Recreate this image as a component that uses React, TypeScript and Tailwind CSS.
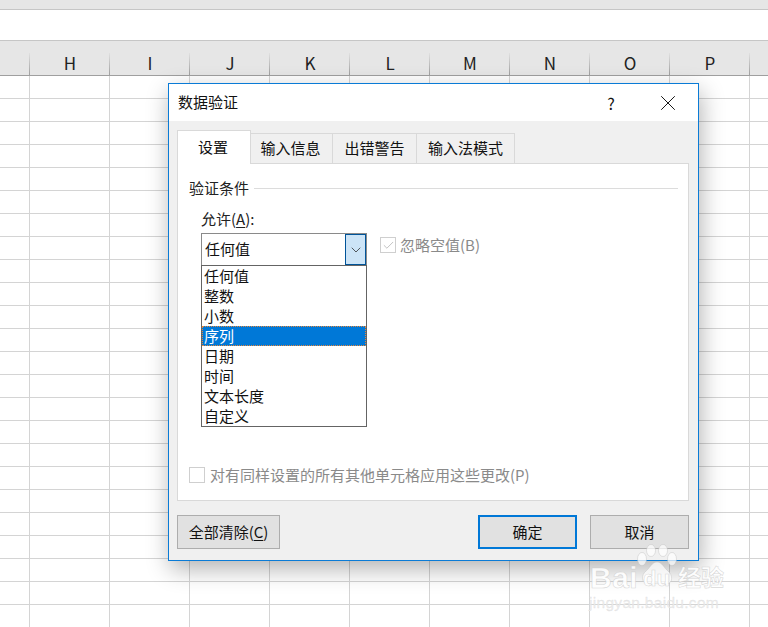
import { ChevronDown, Check, X } from "lucide-react";

const columns = ["H", "I", "J", "K", "L", "M", "N", "O", "P"];
const options = ["任何值", "整数", "小数", "序列", "日期", "时间", "文本长度", "自定义"];
const tabs = [
  { label: "输入信息", width: "w-[83px] pr-[2px]" },
  { label: "出错警告", width: "w-[85px]" },
  { label: "输入法模式", width: "w-[99px]" },
];
const rows = Array.from({ length: 24 }, (_, i) => i);
const cells = Array.from({ length: 10 }, (_, i) => i);

function Sheet() {
  return (
    <div className="flex flex-col">
      <div className="h-[10px] bg-[#e6e6e6] border-b border-[#c6c6c6]" />
      <div className="h-[31px] bg-white border-b border-[#c6c6c6]" />
      <div className="flex h-[35px] bg-[#e6e6e6] border-b border-[#9f9f9f]">
        <HeaderCell className="w-[30px]" />
        {columns.map((c) => (
          <HeaderCell key={c} label={c} className="w-[80px]" />
        ))}
      </div>
      {rows.map((r) => (
        <div key={r} className="flex h-[23px] shrink-0">
          <div className="w-[30px] shrink-0 border-r border-b border-[#d4d4d4]" />
          {cells.map((c) => (
            <div key={c} className="w-[80px] shrink-0 border-r border-b border-[#d4d4d4]" />
          ))}
        </div>
      ))}
    </div>
  );
}

function HeaderCell({ label, className }: { label?: string; className: string }) {
  return (
    <div className={`relative shrink-0 flex items-center justify-center text-[17px] leading-none text-[#222] pt-[15px] pb-[7px] ${className}`}>
      {label}
      <div className="absolute right-0 bottom-0 w-px h-[22px] bg-gradient-to-b from-[#e0e0e0] to-[#9f9f9f]" />
    </div>
  );
}

function Dialog() {
  return (
    <div className="absolute left-[168px] top-[83px] w-[531px] h-[478px] flex flex-col bg-[#f0f0f0] border-[1.5px] border-[#0a7bd6] shadow-[2px_8px_22px_rgba(0,0,0,0.3)]">
      <div className="h-[37px] shrink-0 bg-white flex items-center pl-[9px] text-[15px] text-[#111]">
        <span className="flex-1">数据验证</span>
        <span className="w-[14px] text-center text-[16px] mr-[37px]">?</span>
        <X size={26} strokeWidth={0.9} className="mr-[17px] text-[#111]" />
      </div>
      <div className="flex-1 flex flex-col px-[8px]">
        <div className="flex h-[42px] items-end shrink-0">
          <div className="w-[74px] h-[34px] bg-white border border-b-0 border-[#d9d9d9] flex items-center justify-center text-[15px] text-[#111] relative z-10 -mb-px pb-[1px] pr-[2px]">
            设置
          </div>
          {tabs.map((t) => (
            <div key={t.label} className={`${t.width} h-[30px] -ml-px bg-[#f0f0f0] border border-b-0 border-[#d9d9d9] flex items-center justify-center text-[15px] text-[#111]`}>
              {t.label}
            </div>
          ))}
        </div>
        <div className="h-[338px] w-[512px] shrink-0 bg-white border border-[#d9d9d9] flex flex-col pl-[11px] pr-[10px]">
          <div className="flex items-center h-[22px] mt-[13px] text-[15px] text-[#222]">
            <span>验证条件</span>
            <div className="flex-1 h-px bg-[#dcdcdc] ml-[5px]" />
          </div>
          <div className="ml-[12px] mt-[9px] h-[22px] flex items-center text-[15px] text-[#222]">
            <span>允许(<span className="underline underline-offset-2">A</span>):</span>
          </div>
          <div className="ml-[12px] mt-[3px] flex items-start relative">
            <div className="w-[166px] h-[33px] border border-[#8a8a8a] flex items-center bg-white">
              <span className="flex-1 pl-[3px] text-[15px] text-[#111]">任何值</span>
              <div className="w-[21px] h-[31px] bg-[#cce4f7] border border-[#005499] flex items-center justify-center">
                <ChevronDown size={16} strokeWidth={1.1} className="text-[#222]" />
              </div>
            </div>
            <div className="ml-[13px] mt-[4px] flex items-center">
              <div className="w-[16px] h-[16px] border border-[#cfcfcf] flex items-center justify-center">
                <Check size={13} strokeWidth={1.5} className="text-[#b5b5b5]" />
              </div>
              <span className="ml-[4px] text-[15px] leading-[16px] text-[#8a8a8a]">忽略空值(B)</span>
            </div>
            <div className="absolute left-0 top-[32px] w-[166px] h-[162px] bg-white border border-[#646464] flex flex-col z-20">
              {options.map((o) => (
                <div
                  key={o}
                  className={o === "序列"
                    ? "h-[20px] shrink-0 pl-[2px] flex items-center text-[15px] bg-[#0078d7] text-white outline-1 -outline-offset-1 outline-dotted outline-[#e8873a]"
                    : "h-[20px] shrink-0 pl-[2px] flex items-center text-[15px] text-[#111]"}
                >
                  {o}
                </div>
              ))}
            </div>
          </div>
          <div className="mt-auto mb-[17px] flex items-center">
            <div className="w-[16px] h-[16px] border border-[#cfcfcf]" />
            <span className="ml-[5px] text-[15px] leading-[16px] text-[#8a8a8a]">对有同样设置的所有其他单元格应用这些更改(P)</span>
          </div>
        </div>
        <div className="flex mt-[14px]">
          <button className="w-[103px] h-[34px] bg-[#e1e1e1] border border-[#adadad] text-[15px] text-[#111]">
            全部清除(<span className="underline underline-offset-2">C</span>)
          </button>
          <button className="ml-[198px] w-[99px] h-[34px] bg-[#e1e1e1] border-2 border-[#0078d7] text-[15px] text-[#111]">确定</button>
          <button className="ml-[13px] w-[99px] h-[34px] bg-[#e1e1e1] border border-[#adadad] text-[15px] text-[#111]">取消</button>
        </div>
      </div>
    </div>
  );
}

function Watermark() {
  return (
    <div className="absolute left-[588px] top-[544px] w-[140px] h-[66px] text-[rgba(255,255,255,0.9)] pointer-events-none [-webkit-text-stroke:0.6px_rgba(190,190,190,0.6)]">
      <svg className="absolute left-[48px] top-0" width="42" height="44" viewBox="0 0 42 44" fill="rgba(255,255,255,0.7)" stroke="rgba(190,190,190,0.7)" strokeWidth="0.6">
        <ellipse cx="6" cy="15" rx="4.5" ry="6.5" />
        <ellipse cx="15" cy="6.5" rx="4.5" ry="6" />
        <ellipse cx="27" cy="6.5" rx="4.5" ry="6" />
        <ellipse cx="36" cy="15" rx="4.5" ry="6.5" />
        <path d="M21 18c-5 0-7 6-11 9-5 4-5 12 2 13 3 1 6-1 9-1s6 2 10 1c6-1 6-9 1-13-4-3-6-9-11-9z" />
      </svg>
      <span className="absolute left-[2px] top-[19px] text-[30px] leading-[30px] tracking-[0.5px] font-bold font-['Liberation_Sans',sans-serif]">Bai</span>
      <span className="absolute left-[55px] top-[24px] text-[22px] leading-[22px] font-bold font-['Liberation_Sans',sans-serif]">du</span>
      <span className="absolute left-[90px] top-[20px] text-[23px] leading-[24px] font-bold">经验</span>
      <span className="absolute left-[1px] top-[51px] text-[15.5px] leading-[16px] font-['Liberation_Sans',sans-serif] tracking-[0.3px] [-webkit-text-stroke:0.3px_rgba(200,200,200,0.45)] text-[rgba(236,236,236,0.9)]">jingyan.baidu.com</span>
    </div>
  );
}

export default function App() {
  return (
    <div className="relative w-[768px] h-[627px] overflow-hidden bg-white font-['Noto_Sans_CJK_SC','Noto_Sans',sans-serif]">
      <Sheet />
      <Dialog />
      <Watermark />
    </div>
  );
}
